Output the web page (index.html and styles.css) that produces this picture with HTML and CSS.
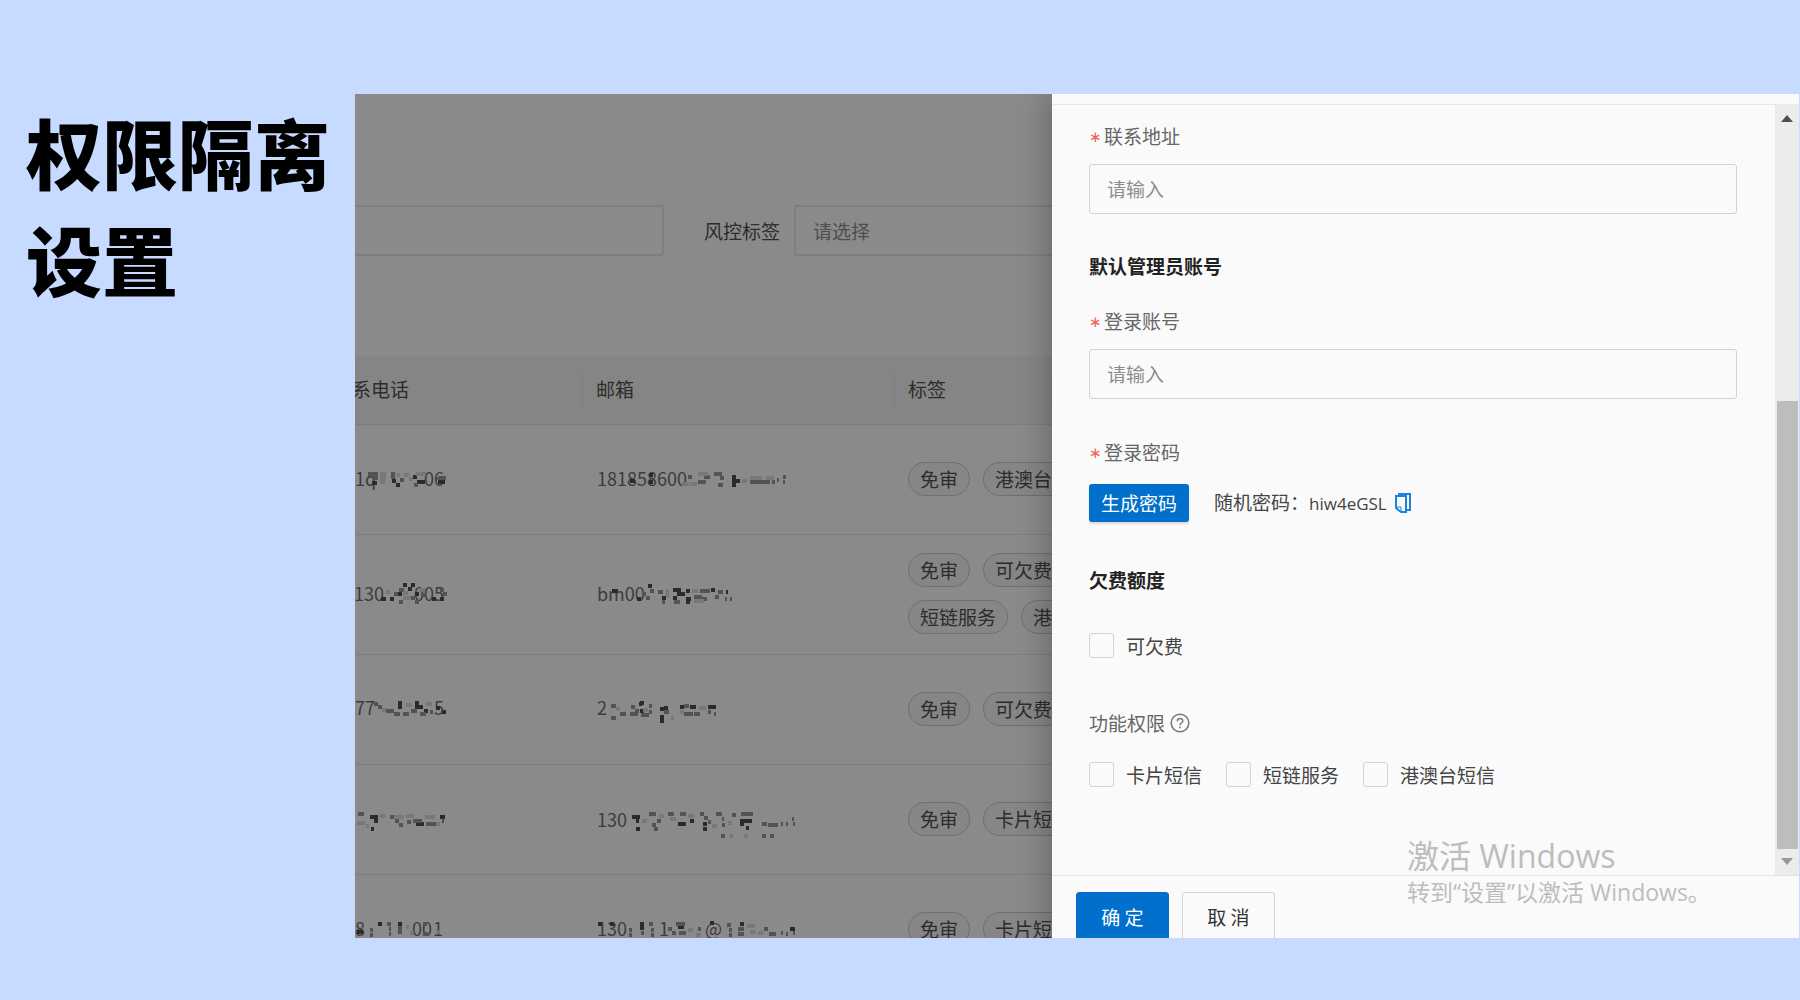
FILE: index.html
```html
<!DOCTYPE html>
<html lang="zh-CN">
<head>
<meta charset="utf-8">
<title>权限隔离设置</title>
<link rel="stylesheet" href="styles.css">
</head>
<body>
<h1 class="title">权限隔离设置</h1>
<main class="screen">
  <section class="page">
    <form class="filters">
      <input class="filter-input" type="text" aria-label="筛选">
      <label class="filter-label" for="risk">风控标签</label>
      <select class="filter-select" id="risk"><option>请选择</option></select>
    </form>
    <table class="list">
      <colgroup><col class="col-phone"><col class="col-mail"><col></colgroup>
      <thead>
        <tr><th>系电话</th><th>邮箱</th><th>标签</th></tr>
      </thead>
      <tbody>
        <tr>
          <td><svg class="masked" viewBox="0 0 210 34" aria-hidden="true"><text x="3" y="24">1q</text><text x="72" y="24">06</text><path class="dark" d="M20 21h5M40 19h4M44 23h4M61 15h4M65 20h8M86 20h7"/><path class="mid" d="M16 12h10M22 16h4M39 12h4M39 15h4M48 18h4M62 23h4M86 16h8"/><path class="light" d="M28 12h6M28 20h5M52 13h5M64 12h10M28 16h6M44 13h4M57 17h4"/></svg></td>
          <td><svg class="masked" viewBox="0 0 210 34" aria-hidden="true"><text x="1" y="24">181858600</text><path class="dark" d="M34 19h5M53 13h4M53 20h4M136 15h4M136 19h8M136 23h4"/><path class="mid" d="M92 15h4M102 20h8M108 15h6M118 12h8M124 16h4M122 23h5M154 20h20M176 20h3M181 18h2M187 15h3M187 20h2"/><path class="light" d="M86 22h7M94 22h7M102 12h10M146 19h5M154 16h12M170 16h8"/></svg></td>
          <td><div class="tags"><span class="tag">免审</span><span class="tag">港澳台短信</span></div></td>
        </tr>
        <tr>
          <td><svg class="masked" viewBox="0 0 210 34" aria-hidden="true"><text x="2" y="24">130</text><text x="62" y="24">005</text><path class="dark" d="M29 22h5M38 22h4M46 17h4M51 8h4M56 12h4M59 8h4M63 17h4M80 22h4M88 22h4"/><path class="mid" d="M42 17h4M47 13h5M47 25h4M59 21h4M63 25h4M69 18h5M88 13h4M91 17h4"/><path class="light" d="M34 15h4M51 21h8M67 13h6M51 16h5"/></svg></td>
          <td><svg class="masked" viewBox="0 0 210 34" aria-hidden="true"><text x="1" y="24">bm00</text><path class="dark" d="M16 14h6M41 22h4M52 9h4M66 21h4M77 13h8M81 17h8M77 21h4M90 14h4M90 22h5M90 25h4M115 13h4M130 15h2"/><path class="mid" d="M46 17h4M50 21h4M54 14h4M62 15h5M66 25h3M78 25h6M98 20h8M104 14h10M106 22h5M119 20h4M122 15h5M129 22h2M134 22h2"/><path class="light" d="M70 14h3M70 18h3M96 14h6M98 24h10"/></svg></td>
          <td><div class="tags"><span class="tag">免审</span><span class="tag">可欠费</span></div><div class="tags"><span class="tag">短链服务</span><span class="tag">港澳台短信</span></div></td>
        </tr>
        <tr>
          <td><svg class="masked masked-low" viewBox="0 0 210 34" aria-hidden="true"><text x="3" y="21">77</text><text x="82" y="21">5</text><path class="dark" d="M46 9h4M46 13h4M63 9h4M63 13h8M72 17h4M84 14h4M90 18h4"/><path class="mid" d="M22 10h4M26 13h4M34 17h8M42 20h6M51 20h6M59 17h6M68 20h6M78 18h3"/><path class="light" d="M30 16h4M54 11h6M74 10h6"/></svg></td>
          <td><svg class="masked masked-low" viewBox="0 0 210 34" aria-hidden="true"><text x="1" y="21">2</text><path class="dark" d="M43 10h3M44 9h4M44 17h4M64 15h4M64 23h4M64 27h4M68 14h4M84 13h4M94 13h6M112 13h8"/><path class="mid" d="M15 12h5M15 24h5M24 20h6M34 20h8M35 13h4M39 17h4M45 21h8M53 12h3M53 18h3M68 18h5M88 12h5M88 20h9M98 20h6M112 18h3M118 20h2"/><path class="light" d="M20 15h4M47 16h5M75 24h3M84 18h4M103 14h7"/></svg></td>
          <td><div class="tags"><span class="tag">免审</span><span class="tag">可欠费</span></div></td>
        </tr>
        <tr>
          <td><svg class="masked masked-low" viewBox="0 0 210 34" aria-hidden="true"><path class="dark" d="M18 13h8M22 17h4M19 25h3M64 20h8M88 13h5"/><path class="mid" d="M6 10h6M38 13h4M43 17h4M47 21h4M55 18h4M61 17h9M74 20h10M90 17h2"/><path class="light" d="M5 19h8M14 22h3M28 12h5M42 13h10M54 12h8M73 13h10M84 20h4"/></svg></td>
          <td><svg class="masked masked-low" viewBox="0 0 210 34" aria-hidden="true"><text x="1" y="23">130</text><path class="dark" d="M36 13h8M40 17h3M40 25h4M82 20h8M94 17h4M107 20h4M107 25h4M144 17h12M144 20h4M150 24h3"/><path class="mid" d="M53 10h7M56 21h4M61 17h4M58 25h4M72 10h6M84 10h6M104 10h4M108 14h4M112 18h3M120 10h6M126 15h2M126 21h3M136 11h4M145 10h12M166 20h5M172 21h10M185 20h2M190 20h2M196 15h2M197 20h2M125 32h4M166 32h4M174 32h4"/><path class="light" d="M46 17h5M63 12h5M74 15h6M92 12h6M116 22h5M132 19h4M134 32h3M148 32h4"/></svg></td>
          <td><div class="tags"><span class="tag">免审</span><span class="tag">卡片短信</span></div></td>
        </tr>
        <tr>
          <td><svg class="masked" viewBox="0 0 210 34" aria-hidden="true"><text x="3" y="24">8</text><text x="60" y="24">00</text><text x="81" y="24">1</text><path class="dark" d="M5 20h6M26 12h4M46 12h4"/><path class="mid" d="M18 18h3M18 23h3M35 12h4M37 17h2M37 22h2M46 16h4M46 20h4M71 12h4M71 22h5"/><path class="light" d="M54 15h3M58 21h4M84 20h3"/></svg></td>
          <td><svg class="masked" viewBox="0 0 210 34" aria-hidden="true"><text x="1" y="24">130</text><text x="63" y="24">1</text><text x="109" y="24">@</text><path class="dark" d="M2 12h4M14 12h4M44 12h4M44 16h4M82 15h6M114 11h4M144 12h4M194 17h5"/><path class="mid" d="M33 18h3M33 23h3M45 21h3M53 12h4M55 18h3M55 23h3M72 17h4M76 21h4M80 12h9M83 21h7M102 17h3M131 13h4M133 18h3M133 23h3M142 17h6M142 22h6M168 17h4M173 22h7M185 21h2M190 22h2M197 21h2"/><path class="light" d="M92 18h5M100 23h5M151 14h8M154 20h6M162 21h5"/></svg></td>
          <td><div class="tags"><span class="tag">免审</span><span class="tag">卡片短信</span></div></td>
        </tr>
      </tbody>
    </table>
  </section>

  <aside class="drawer">
    <header class="drawer-head"></header>
    <div class="drawer-body">
      <form class="form" id="account">
        <label class="label required" for="address">联系地址</label>
        <input class="input" id="address" type="text" placeholder="请输入">
        <h2 class="heading">默认管理员账号</h2>
        <label class="label required" for="login">登录账号</label>
        <input class="input" id="login" type="text" placeholder="请输入">
        <p class="label label-spaced required">登录密码</p>
        <div class="password">
          <button class="generate" type="button">生成密码</button>
          <span class="random">随机密码：<span class="code">hiw4eGSL</span></span>
          <button class="copy" type="button" aria-label="复制"><svg viewBox="0 0 16 20" fill="none" stroke="#1b83db" stroke-width="2"><path d="M3 1h12v16h-3"/><path d="M1 3h10v16H6l-5-4z"/><path d="M1 14h5v5" stroke-width="1"/></svg></button>
        </div>
        <h2 class="heading heading-spaced">欠费额度</h2>
        <div class="checks">
          <label class="check"><input type="checkbox">可欠费</label>
        </div>
        <p class="label label-rights">功能权限 <svg class="help" viewBox="0 0 20 20" fill="none" stroke="#777" stroke-width="1.5"><circle cx="10" cy="10" r="8.8"/><path d="M7.3 8.2c0-3.6 5.5-3.5 5.5-.2 0 2-2.8 2-2.8 4.2M10 13.6v1.6"/></svg></p>
        <div class="checks">
          <label class="check"><input type="checkbox">卡片短信</label>
          <label class="check"><input type="checkbox">短链服务</label>
          <label class="check"><input type="checkbox">港澳台短信</label>
        </div>
      </form>
      <div class="scrollbar" aria-hidden="true">
        <span class="arrow-up"></span>
        <span class="thumb"></span>
        <span class="arrow-down"></span>
      </div>
    </div>
    <footer class="drawer-foot">
      <button class="btn btn-primary" type="submit" form="account">确 定</button>
      <button class="btn" type="button">取 消</button>
    </footer>
    <div class="watermark">
      <p class="watermark-title">激活 Windows</p>
      <p class="watermark-text">转到“设置”以激活 Windows。</p>
    </div>
  </aside>
</main>
</body>
</html>
```
FILE: styles.css
```css
* {
  box-sizing: border-box;
}

body {
  display: flex;
  min-height: 100vh;
  margin: 0;
  padding: 94px 1px 62px 0;
  background: #c7daff;
  color: #444;
  font-family: "Noto Sans CJK SC", sans-serif;
  font-size: 19px;
  line-height: 24px;
}

h2,
p {
  margin: 0;
}

button,
input,
select {
  margin: 0;
  font: inherit;
}

.title {
  flex: 0 0 355px;
  margin: 0;
  padding: 4px 22px 0 26px;
  color: #000;
  font-size: 76px;
  font-weight: 900;
  line-height: 107px;
}

.screen {
  display: flex;
  flex: 1;
  min-width: 0;
  height: calc(100vh - 156px);
  overflow: hidden;
}

/* Dimmed list page behind the drawer */
.page {
  flex: 1;
  min-width: 0;
  overflow: hidden;
  background: #8a8a8a;
  color: #2c2c2c;
}

.filters {
  display: flex;
  align-items: center;
  padding: 111px 0 100px;
}

.filter-input,
.filter-select {
  height: 51px;
  border: 2px solid #7e7e7e;
  background: transparent;
}

.filter-input {
  width: 309px;
  border-left: 0;
  border-radius: 0 3px 3px 0;
}

.filter-label {
  padding: 0 14px 0 40px;
}

.filter-select {
  flex: 1;
  min-width: 0;
  padding: 0 17px;
  border-right: 0;
  border-radius: 3px 0 0 3px;
  appearance: none;
  color: #4d4d4d;
}

.list {
  width: calc(100% + 16px);
  margin-left: -16px;
  border-spacing: 0;
  table-layout: fixed;
}

.col-phone {
  width: 244px;
}

.col-mail {
  width: 312px;
}

.list th {
  height: 68px;
  padding: 0 13px 2px;
  background: linear-gradient(#7d7d7d, #7d7d7d) right / 1px 30px no-repeat #858585;
  font-weight: 400;
  text-align: left;
}

.list td {
  height: 110px;
  padding: 18px 13px 20px;
  border-top: 1px solid #7d7d7d;
  white-space: nowrap;
}

.masked {
  display: block;
  width: 210px;
  height: 34px;
  fill: #3c3c3c;
  font-size: 18px;
  stroke-width: 4;
}

.masked-low {
  margin-top: 4px;
}

.masked path {
  fill: none;
}

.masked .dark {
  stroke: #2b2b2b;
}

.masked .mid {
  stroke: #535353;
}

.masked .light {
  stroke: #787878;
}

.tags {
  display: flex;
  gap: 13px;
}

.tags + .tags {
  margin-top: 13px;
}

.tag {
  flex: none;
  padding: 4px 11px;
  border: 1px solid #6f6f6f;
  border-radius: 17px;
  background: #868686;
}

/* Drawer */
.drawer {
  position: relative;
  display: flex;
  flex: 0 0 747px;
  flex-direction: column;
  background: #fafafa;
  box-shadow: -4px 0 28px rgba(0, 0, 0, 0.25);
}

.drawer-head {
  height: 11px;
  border-bottom: 1px solid #e8e8e8;
}

.drawer-body {
  display: flex;
  flex: 1;
  min-height: 0;
}

.form {
  flex: 1;
  padding: 19px 38px 0 37px;
}

.label {
  display: block;
  margin-bottom: 16px;
  color: #666;
}

.label-spaced {
  margin: 41px 0 20px;
}

.label-rights {
  display: flex;
  gap: 5px;
  align-items: center;
  margin: 53px 0 27px;
}

.required::before {
  display: inline-block;
  width: 15px;
  color: #f0625f;
  font-family: "DejaVu Sans", sans-serif;
  font-size: 15px;
  line-height: 15px;
  vertical-align: 2px;
  content: "∗";
}

.input {
  display: block;
  width: 100%;
  height: 50px;
  padding: 0 17px 2px;
  border: 1px solid #d3d3d3;
  border-radius: 3px;
  background: transparent;
}

.input::placeholder {
  color: #8c8c8c;
}

.heading {
  margin: 40px 0 31px;
  color: #222;
  font-size: 19px;
  font-weight: 700;
  line-height: 24px;
}

.heading-spaced {
  margin: 46px 0 41px;
}

.password {
  display: flex;
  align-items: center;
}

.generate {
  width: 100px;
  height: 38px;
  padding: 0 0 1px;
  border: 0;
  border-radius: 3px;
  background: #0070cc;
  box-shadow: 0 2px 2px rgba(0, 0, 0, 0.12);
  color: #fff;
}

.random {
  margin: 0 8px 0 25px;
}

.code {
  font-family: "Open Sans", sans-serif;
  font-size: 17px;
}

.copy {
  padding: 0;
  border: 0;
  background: none;
}

.copy svg {
  display: block;
  width: 16px;
  height: 20px;
}

.help {
  width: 20px;
  height: 20px;
}

.checks {
  display: flex;
  gap: 24px;
}

.check {
  display: flex;
  gap: 12px;
  align-items: center;
}

.check input {
  width: 25px;
  height: 25px;
  border: 1px solid #d3d3d3;
  border-radius: 3px;
  appearance: none;
}

.scrollbar {
  display: flex;
  flex: 0 0 24px;
  flex-direction: column;
  align-items: center;
  padding: 10px 0;
  background: #ececec;
}

.arrow-up,
.arrow-down {
  border: 6px solid transparent;
}

.arrow-up {
  border-top: 0;
  border-bottom: 7px solid #505050;
}

.arrow-down {
  border-top: 7px solid #999;
  border-bottom: 0;
}

.thumb {
  flex: 1;
  width: 21px;
  margin: 279px 0 9px;
  background: #bdbdbd;
}

.drawer-foot {
  display: flex;
  flex: 0 0 63px;
  gap: 13px;
  align-items: flex-start;
  padding: 16px 24px 0;
  overflow: hidden;
  border-top: 1px solid #e3e3e3;
}

.btn {
  flex: none;
  width: 93px;
  height: 50px;
  border: 1px solid #d3d3d3;
  border-radius: 3px;
  background: #fafafa;
  color: #333;
}

.btn-primary {
  border-color: #0070cc;
  background: #0070cc;
  color: #fff;
}

.watermark {
  position: absolute;
  bottom: 28px;
  left: 355px;
  color: #bdbdbd;
  font-family: "Open Sans", "Noto Sans CJK SC", sans-serif;
  line-height: 36px;
  pointer-events: none;
}

.watermark-title {
  font-size: 32px;
}

.watermark-text {
  font-size: 23px;
}
```
